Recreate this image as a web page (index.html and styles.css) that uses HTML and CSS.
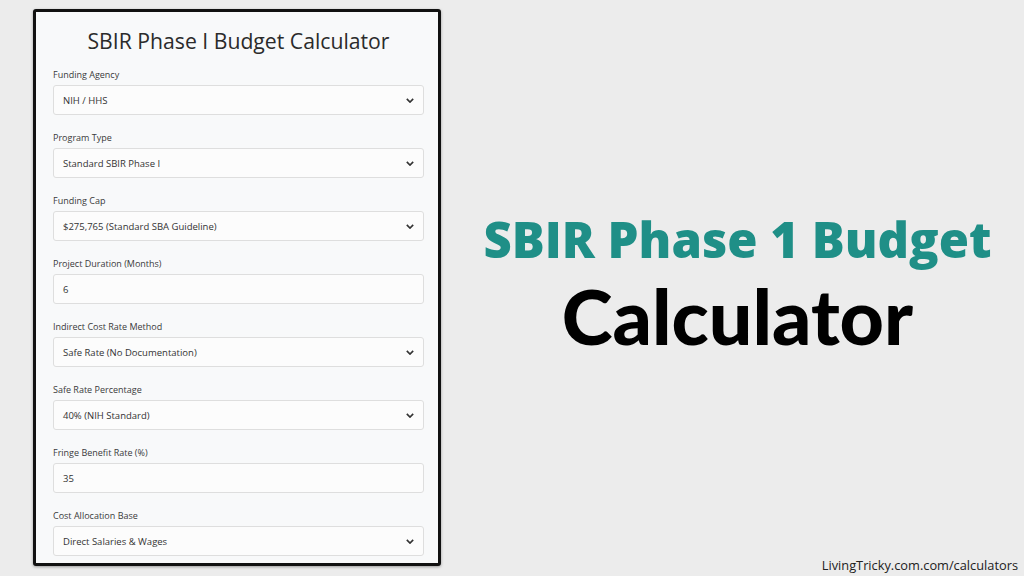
FILE: index.html
```html
<!DOCTYPE html>
<html>
<head>
<meta charset="utf-8">
<link rel="stylesheet" href="styles.css">
</head>
<body>
<div class="page">
  <div class="card">
    <h1 class="title">SBIR Phase I Budget Calculator</h1>
    <div class="group">
      <div class="label">Funding Agency</div>
      <div class="field"><span>NIH / HHS</span><svg class="chev" viewBox="0 0 10 6"><path d="M1 1 L5 5 L9 1" /></svg></div>
    </div>
    <div class="group">
      <div class="label">Program Type</div>
      <div class="field"><span>Standard SBIR Phase I</span><svg class="chev" viewBox="0 0 10 6"><path d="M1 1 L5 5 L9 1" /></svg></div>
    </div>
    <div class="group">
      <div class="label">Funding Cap</div>
      <div class="field"><span>$275,765 (Standard SBA Guideline)</span><svg class="chev" viewBox="0 0 10 6"><path d="M1 1 L5 5 L9 1" /></svg></div>
    </div>
    <div class="group">
      <div class="label">Project Duration (Months)</div>
      <div class="field"><span>6</span></div>
    </div>
    <div class="group">
      <div class="label">Indirect Cost Rate Method</div>
      <div class="field"><span>Safe Rate (No Documentation)</span><svg class="chev" viewBox="0 0 10 6"><path d="M1 1 L5 5 L9 1" /></svg></div>
    </div>
    <div class="group">
      <div class="label">Safe Rate Percentage</div>
      <div class="field"><span>40% (NIH Standard)</span><svg class="chev" viewBox="0 0 10 6"><path d="M1 1 L5 5 L9 1" /></svg></div>
    </div>
    <div class="group">
      <div class="label">Fringe Benefit Rate (%)</div>
      <div class="field"><span>35</span></div>
    </div>
    <div class="group last">
      <div class="label">Cost Allocation Base</div>
      <div class="field"><span>Direct Salaries &amp; Wages</span><svg class="chev" viewBox="0 0 10 6"><path d="M1 1 L5 5 L9 1" /></svg></div>
    </div>
  </div>
  <div class="side">
    <div class="hero">
      <div class="hero-top">SBIR Phase 1 Budget</div>
      <div class="hero-bottom">Calculator</div>
    </div>
    <div class="footer">LivingTricky.com.com/calculators</div>
  </div>
</div>
</body>
</html>
```
FILE: styles.css
```css
html, body {
  margin: 0;
  padding: 0;
}
body {
  background: #ececec;
  width: 1024px;
  height: 576px;
  overflow: hidden;
  font-family: "Open Sans", "Noto Sans", sans-serif;
}
.page {
  display: flex;
  height: 576px;
  padding: 9px 0 0 33px;
  box-sizing: border-box;
}
.card {
  width: 408px;
  height: 557px;
  box-sizing: border-box;
  border: 3px solid #111;
  border-radius: 3px;
  background: #f8f9fa;
  padding: 15px 14px 0 17px;
  box-shadow: 0 1px 3px rgba(0,0,0,0.35);
}
.title {
  margin: 0 0 14px;
  font-size: 21.2px;
  line-height: 28px;
  font-weight: 500;
  text-align: center;
  color: #2b2b2b;
}
.group {
  margin-bottom: 17px;
}
.group.last {
  margin-bottom: 0;
}
.label {
  font-size: 9px;
  line-height: 12px;
  color: #3a3a3a;
  margin-bottom: 4px;
}
.field {
  height: 30px;
  box-sizing: border-box;
  border: 1px solid #dedede;
  border-radius: 3px;
  background: #fcfcfc;
  display: flex;
  align-items: center;
  justify-content: space-between;
  padding: 0 9px 0 9px;
  font-size: 9.5px;
  color: #333;
}
.chev {
  width: 8px;
  height: 5px;
}
.chev path {
  fill: none;
  stroke: #333;
  stroke-width: 2;
}
.side {
  flex: 1;
  display: flex;
  flex-direction: column;
  align-items: center;
}
.hero {
  margin-top: 200px;
  display: flex;
  flex-direction: column;
  align-items: center;
  padding-left: 10px;
}
.hero-top {
  font-family: "Open Sans", sans-serif;
  font-weight: 800;
  font-size: 49px;
  line-height: 60px;
  color: #1f8f87;
}
.hero-bottom {
  font-family: "Lato", sans-serif;
  font-weight: 900;
  font-size: 77px;
  line-height: 80px;
  color: #000;
  margin-top: 6px;
}
.footer {
  margin-top: auto;
  align-self: flex-end;
  margin-right: 6px;
  margin-bottom: 2px;
  font-size: 12.8px;
  line-height: 18px;
  color: #222;
}
```
